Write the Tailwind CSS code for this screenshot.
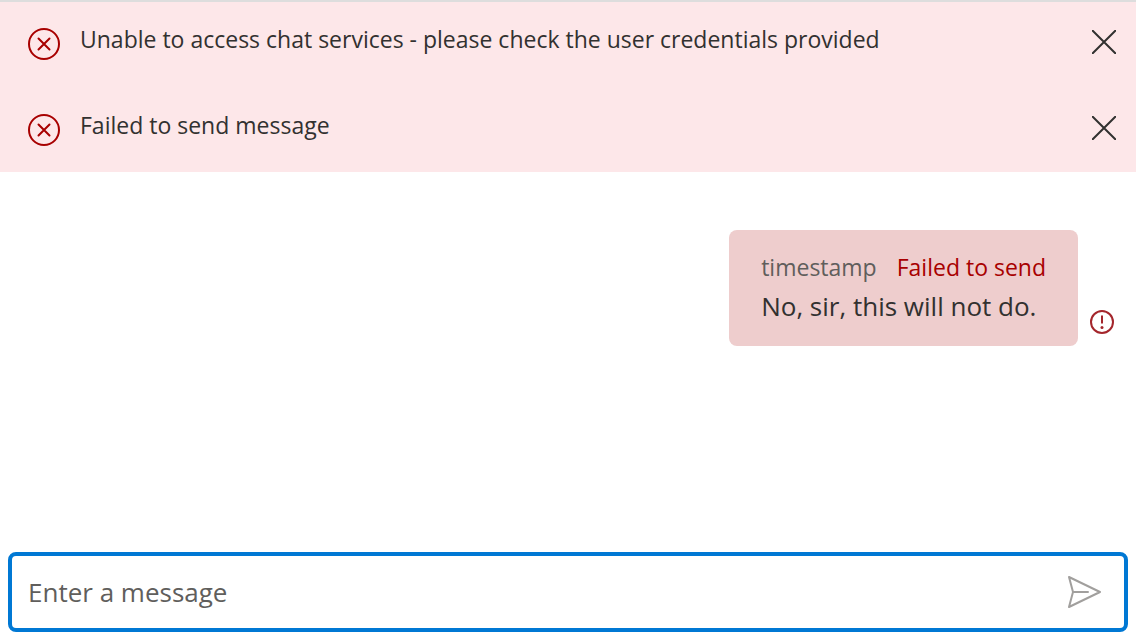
<!DOCTYPE html>
<html lang="en">
<head>
<meta charset="utf-8">
<title>Chat</title>
<script src="https://cdn.jsdelivr.net/npm/@tailwindcss/browser@4"></script>
</head>
<body class="flex min-h-screen flex-col bg-white font-['Open_Sans','Noto_Sans',sans-serif] text-[#323130]">
<section class="border-t-2 border-[#dddddd] bg-[#fde7e9]" aria-label="Errors">
  <div role="alert" class="flex min-h-21 items-start pt-5 pr-4 pl-7">
    <svg class="mt-1.5 size-8 shrink-0" viewBox="0 0 32 32" fill="none" stroke="#a80000" stroke-width="2"><circle cx="16" cy="16" r="15"/><path d="M10.5 10.5l11 11M21.5 10.5l-11 11" stroke-linecap="round"/></svg>
    <p class="ml-5 grow text-[23px] leading-[34px]">Unable to access chat services - please check the user credentials provided</p>
    <button type="button" aria-label="Dismiss" class="size-8 shrink-0 pt-2"><svg class="mx-auto size-6" viewBox="0 0 24 24" fill="none" stroke="#323130" stroke-width="2"><path d="M0 0l24 24M24 0L0 24"/></svg></button>
  </div>
  <div role="alert" class="mt-0.5 flex min-h-21 items-start pt-5 pr-4 pl-7">
    <svg class="mt-1.5 size-8 shrink-0" viewBox="0 0 32 32" fill="none" stroke="#a80000" stroke-width="2"><circle cx="16" cy="16" r="15"/><path d="M10.5 10.5l11 11M21.5 10.5l-11 11" stroke-linecap="round"/></svg>
    <p class="ml-5 grow text-[23px] leading-[34px]">Failed to send message</p>
    <button type="button" aria-label="Dismiss" class="size-8 shrink-0 pt-2"><svg class="mx-auto size-6" viewBox="0 0 24 24" fill="none" stroke="#323130" stroke-width="2"><path d="M0 0l24 24M24 0L0 24"/></svg></button>
  </div>
</section>
<main class="flex grow items-start justify-end pt-14.5 pr-5.5">
  <div class="flex items-end gap-3">
    <article class="rounded-lg bg-[#eecdcd] px-8 pt-5 pb-4.5">
      <div class="flex gap-5 text-[23px] leading-[34px]"><span class="text-[#605e5c]">timestamp</span><span class="text-[#a80000]">Failed to send</span></div>
      <p class="text-[26px] leading-11">No, sir, this will not do.</p>
    </article>
    <svg class="mb-3 size-6 shrink-0" viewBox="0 0 24 24" fill="none" stroke="#a4262c" stroke-width="2"><circle cx="12" cy="12" r="11"/><path d="M12 5.5v8"/><circle cx="12" cy="17.5" r="1.5" fill="#a4262c" stroke="none"/></svg>
  </div>
</main>
<form class="mx-2 mb-2 flex h-20 items-center rounded-lg border-4 border-[#0078d4] pr-5 pl-4">
  <input type="text" aria-label="Enter a message" placeholder="Enter a message" class="min-w-0 grow text-[26px] outline-none placeholder:text-[#605e5c]">
  <button type="submit" aria-label="Send" class="size-10 shrink-0"><svg class="mx-auto size-9" viewBox="0 0 36 36" fill="none" stroke="#a19f9d" stroke-width="2" stroke-linejoin="round" stroke-linecap="round"><path d="M3 3L34 18L3 33L7 18ZM7 18H22"/></svg></button>
</form>
</body>
</html>
